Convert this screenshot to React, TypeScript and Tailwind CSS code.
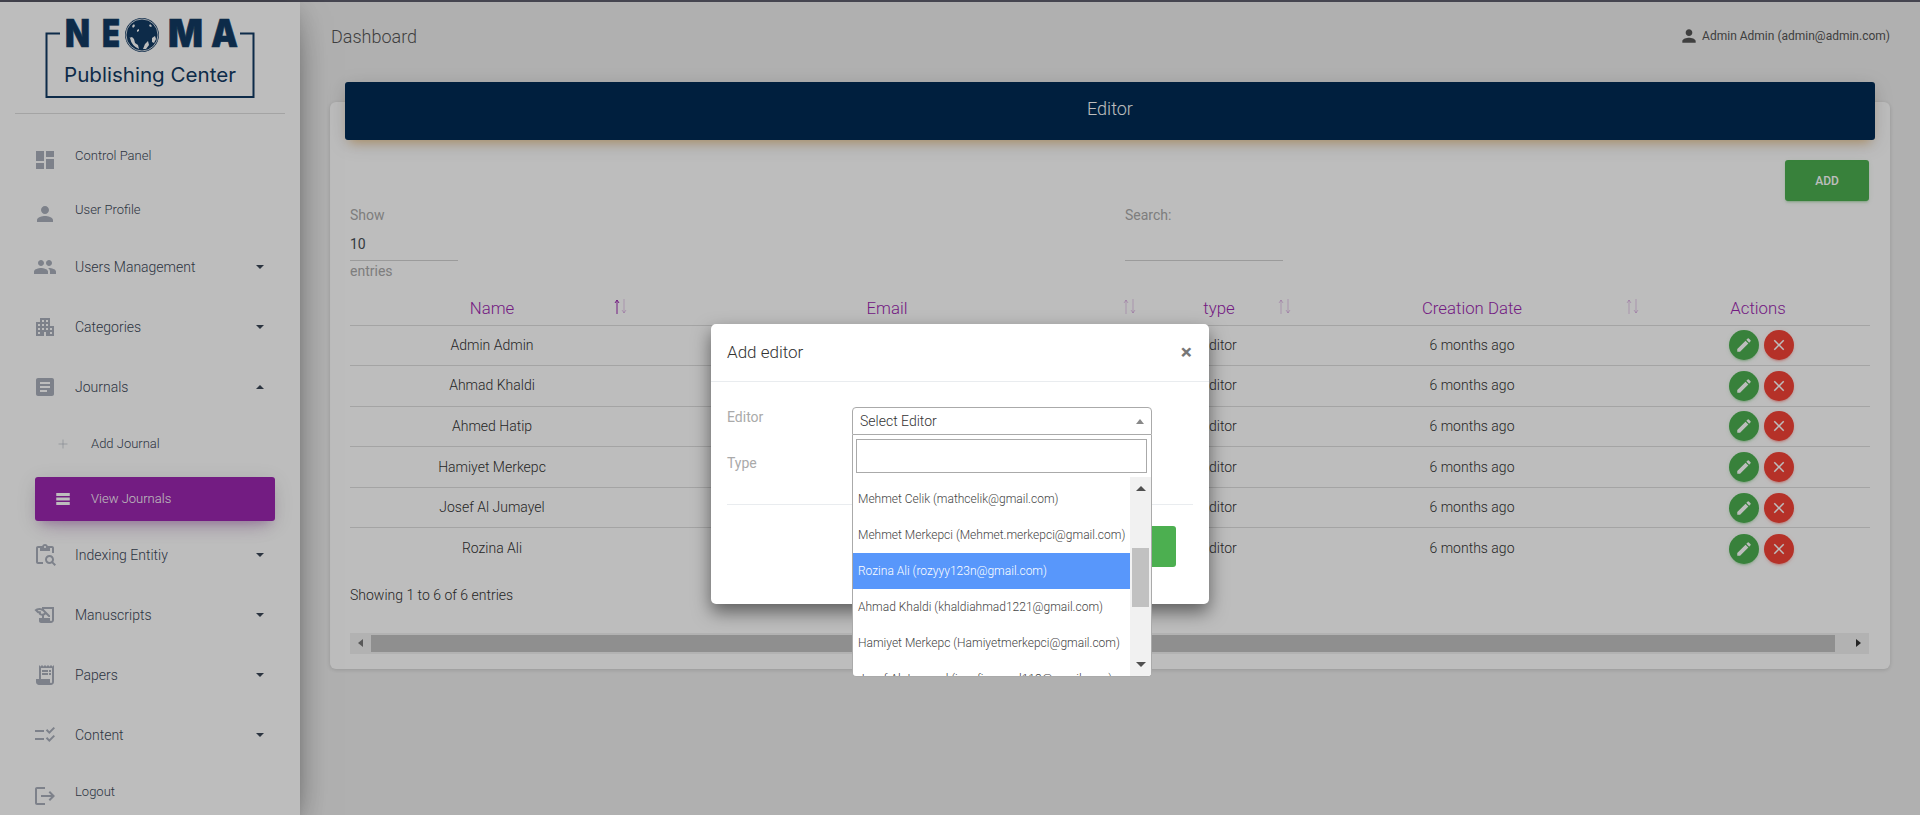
import { Plus } from "lucide-react";
import {
  MdApartment,
  MdArticle,
  MdChecklistRtl,
  MdClose,
  MdContentPasteSearch,
  MdDashboard,
  MdEdit,
  MdHistoryEdu,
  MdLogout,
  MdPeople,
  MdPerson,
  MdReceiptLong,
  MdTableRows,
} from "react-icons/md";

const rows = [
  { name: "Admin Admin", email: "admin@admin.com" },
  { name: "Ahmad Khaldi", email: "khaldiahmad1221@gmail.com" },
  { name: "Ahmed Hatip", email: "ahmedhatip@gmail.com" },
  { name: "Hamiyet Merkepc", email: "Hamiyetmerkepci@gmail.com" },
  { name: "Josef Al Jumayel", email: "josefjumayel113@gmail.com" },
  { name: "Rozina Ali", email: "rozyyy123n@gmail.com" },
];

const options = [
  { label: "Mehmet Celik (mathcelik@gmail.com)" },
  { label: "Mehmet Merkepci (Mehmet.merkepci@gmail.com)" },
  { label: "Rozina Ali (rozyyy123n@gmail.com)", active: true },
  { label: "Ahmad Khaldi (khaldiahmad1221@gmail.com)" },
  { label: "Hamiyet Merkepc (Hamiyetmerkepci@gmail.com)" },
  { label: "Josef Al Jumayel (josefjumayel113@gmail.com)" },
];

function Caret({ up }: { up?: boolean }) {
  return up ? (
    <span className="ml-auto mr-[36px] h-0 w-0 border-x-[4px] border-b-[4px] border-x-transparent border-b-[#3c4858]" />
  ) : (
    <span className="ml-auto mr-[36px] h-0 w-0 border-x-[4px] border-t-[4px] border-x-transparent border-t-[#3c4858]" />
  );
}

function NavLink({ icon, label }: { icon: React.ReactNode; label: string }) {
  return (
    <div className="flex h-[54px] items-center pl-[33px] text-[13px] font-light text-[#3c4858]">
      <span className="mt-[8px] text-[#a9afbb]">{icon}</span>
      <span className="ml-[18px]">{label}</span>
    </div>
  );
}

function NavGroup({ icon, label, open }: { icon: React.ReactNode; label: string; open?: boolean }) {
  return (
    <div className="flex h-[60px] items-center pl-[33px] text-[14px] font-light text-[#3c4858]">
      <span className="text-[#a9afbb]">{icon}</span>
      <span className="ml-[18px]">{label}</span>
      <Caret up={open} />
    </div>
  );
}

function Logo() {
  const navy = "#123a63";
  return (
    <svg width="220" height="109" viewBox="40 2 220 109" className="ml-[40px]">
      <path d="M60 33.5H46.5V97H253.5V33.5H240" fill="none" stroke={navy} strokeWidth="2" />
      <g fill={navy} stroke={navy} strokeWidth="0.6" fontFamily="Inter, sans-serif" fontWeight="900" fontSize="39">
        <text x="65" y="47" textLength="25" lengthAdjust="spacingAndGlyphs">N</text>
        <text x="102" y="47" textLength="18" lengthAdjust="spacingAndGlyphs">E</text>
        <text x="168" y="47" textLength="35" lengthAdjust="spacingAndGlyphs">M</text>
        <text x="211" y="47" textLength="27" lengthAdjust="spacingAndGlyphs">A</text>
      </g>
      <circle cx="142" cy="35" r="17" fill={navy} />
      <circle cx="142" cy="35" r="16" fill="none" stroke="#fff" strokeWidth="0.8" />
      <path
        d="M129 38l3-1 2 2 1 4 3 2 1 4a15 15 0 0 1-9-11zM143 49l2-5 3-3 1 4-3 4a15 15 0 0 1-3 0zM152 38l3-2 1 3-2 4-2-1zM132 26l2-2 1 2-2 2zM137 30l2-1 0 2-2 1zM150 24l2 2-1 1-2-1z"
        fill="#fff"
      />
      <text x="64" y="82" fill={navy} fontFamily="Inter, sans-serif" fontSize="20" textLength="172" lengthAdjust="spacingAndGlyphs">
        Publishing Center
      </text>
    </svg>
  );
}

function Sidebar() {
  return (
    <aside className="relative z-10 flex h-full w-[300px] shrink-0 flex-col bg-white shadow-[0_16px_38px_-12px_rgba(0,0,0,0.56),0_4px_25px_0_rgba(0,0,0,0.12),0_7px_8px_-5px_rgba(0,0,0,0.2)]">
      <div className="h-[111px] shrink-0">
        <Logo />
      </div>
      <div className="mx-[15px] h-px shrink-0 bg-[#ddd]" />
      <nav className="pt-[15px]">
        <NavLink icon={<MdDashboard size={24} />} label="Control Panel" />
        <NavLink icon={<MdPerson size={24} />} label="User Profile" />
        <NavGroup icon={<MdPeople size={24} />} label="Users Management" />
        <NavGroup icon={<MdApartment size={24} />} label="Categories" />
        <NavGroup icon={<MdArticle size={24} />} label="Journals" open />
        <div className="flex h-[54px] items-center pl-[56px] text-[13px] font-light text-[#3c4858]">
          <Plus size={14} strokeWidth={1} className="-mt-px text-[#a9afbb]" />
          <span className="ml-[21px]">Add Journal</span>
        </div>
        <div className="ml-[35px] mr-[25px] mt-[6px] flex h-[44px] items-center rounded-[3px] bg-[#9c27b0] pl-[19px] text-[13px] font-light text-white shadow-[0_12px_20px_-10px_rgba(156,39,176,0.28),0_4px_20px_0_rgba(0,0,0,0.12),0_7px_8px_-5px_rgba(156,39,176,0.2)]">
          <MdTableRows size={18} className="-mt-px" />
          <span className="ml-[19px]">View Journals</span>
        </div>
        <div className="mt-[4px]">
          <NavGroup icon={<MdContentPasteSearch size={24} />} label="Indexing Entitiy" />
          <NavGroup icon={<MdHistoryEdu size={24} />} label="Manuscripts" />
          <NavGroup icon={<MdReceiptLong size={24} />} label="Papers" />
          <NavGroup icon={<MdChecklistRtl size={24} />} label="Content" />
        </div>
        <NavLink icon={<MdLogout size={24} />} label="Logout" />
      </nav>
    </aside>
  );
}

function SortArrows({ active, near }: { active?: boolean; near?: boolean }) {
  return (
    <svg
      width="13"
      height="15"
      viewBox="0 0 13 15"
      fill="none"
      stroke="currentColor"
      strokeWidth="1"
      className={near ? "absolute right-[4px] top-[9px]" : "absolute right-[7px] top-[9px]"}
    >
      <path d="M3 15V1M1 4l2-3 2 3" opacity={active ? 1 : 0.25} />
      <path d="M10 0v14M8 11l2 3 2-3" opacity="0.25" />
    </svg>
  );
}

function EditorTable() {
  const headers = [
    { label: "Name", sort: true, active: true },
    { label: "Email", sort: true, near: true },
    { label: "type", sort: true },
    { label: "Creation Date", sort: true },
    { label: "Actions" },
  ];
  return (
    <table className="mt-[10px] w-[1520px] table-fixed border-collapse">
      <colgroup>
        <col className="w-[284px]" />
        <col className="w-[506px]" />
        <col className="w-[158px]" />
        <col className="w-[348px]" />
        <col className="w-[224px]" />
      </colgroup>
      <thead>
        <tr className="h-[35px] border-b border-[#ddd]">
          {headers.map((h) => (
            <th key={h.label} className="relative pt-[2px] text-center text-[16.8px] font-light text-[#9c27b0]">
              {h.label}
              {h.sort && <SortArrows active={h.active} near={h.near} />}
            </th>
          ))}
        </tr>
      </thead>
      <tbody>
        {rows.map((r, i) => (
          <tr key={r.name} className={i < 5 ? "h-[40.6px] border-b border-[#ddd]" : "h-[40.6px]"}>
            <td className="text-center text-[14px] font-light text-[#333]">{r.name}</td>
            <td className="text-center text-[14px] font-light text-[#333]">{r.email}</td>
            <td className="text-center text-[14px] font-light text-[#333]">Editor</td>
            <td className="text-center text-[14px] font-light text-[#333]">6 months ago</td>
            <td>
              <div className="flex justify-center gap-[5px] pl-[7px]">
                <span className="flex h-[30px] w-[30px] items-center justify-center rounded-full bg-[#4caf50] text-white shadow-[0_2px_2px_0_rgba(76,175,80,0.14),0_3px_1px_-2px_rgba(76,175,80,0.2),0_1px_5px_0_rgba(76,175,80,0.12)]">
                  <MdEdit size={18} />
                </span>
                <span className="flex h-[30px] w-[30px] items-center justify-center rounded-full bg-[#f44336] text-white shadow-[0_2px_2px_0_rgba(244,67,54,0.14),0_3px_1px_-2px_rgba(244,67,54,0.2),0_1px_5px_0_rgba(244,67,54,0.12)]">
                  <MdClose size={18} />
                </span>
              </div>
            </td>
          </tr>
        ))}
      </tbody>
    </table>
  );
}

function Card() {
  return (
    <section className="ml-[30px] mt-[32px] h-[567px] w-[1560px] rounded-[6px] bg-white shadow-[0_1px_4px_0_rgba(0,0,0,0.14)]">
      <div className="relative top-[-20px] mx-[15px] -mb-[20px] flex h-[58px] items-center justify-center rounded-[3px] bg-[#002b54] pb-[5px] text-[18px] font-light text-white shadow-[0_4px_20px_0_rgba(0,0,0,0.14),0_7px_10px_-5px_rgba(255,152,0,0.4)]">
        Editor
      </div>
      <div className="px-[20px] pt-[20px]">
        <div className="flex justify-end pr-px">
          <button className="h-[41px] w-[84px] rounded-[3px] bg-[#4caf50] text-[12px] font-medium text-white shadow-[0_2px_2px_0_rgba(76,175,80,0.14),0_3px_1px_-2px_rgba(76,175,80,0.2),0_1px_5px_0_rgba(76,175,80,0.12)]">
            ADD
          </button>
        </div>
        <div className="mt-[5px] flex text-[14px] leading-[18px] text-[#aaa]">
          <div className="w-[775px]">
            <div>Show</div>
            <div className="mt-[8px] h-[29px] w-[108px] border-b border-[#d2d2d2] leading-[24px] text-[#495057]">10</div>
            <div className="mt-[1px]">entries</div>
          </div>
          <div>
            <div>Search:</div>
            <div className="mt-[8px] h-[29px] w-[158px] border-b border-[#d2d2d2]" />
          </div>
        </div>
        <EditorTable />
        <div className="mt-[17px] text-[14px] font-light leading-[18px] text-[#333]">Showing 1 to 6 of 6 entries</div>
        <div className="mt-[29px] flex h-[21px] w-[1519px] items-center bg-[#f1f1f1]">
          <span className="flex w-[21px] justify-center">
            <span className="h-0 w-0 border-y-[4px] border-r-[5px] border-y-transparent border-r-[#777]" />
          </span>
          <span className="h-[17px] flex-1 bg-[#c1c1c1]" />
          <span className="flex w-[34px] justify-end pr-[8px]">
            <span className="h-0 w-0 border-y-[4px] border-l-[5px] border-y-transparent border-l-[#333]" />
          </span>
        </div>
      </div>
    </section>
  );
}

function SelectDropdown() {
  return (
    <div className="absolute left-[141px] top-[111px] h-[242px] w-[300px] overflow-hidden rounded-b-[4px] border-x border-b border-[#aaa] bg-white">
      <div className="px-[3px] pt-[4px]">
        <div className="h-[34px] w-[291px] border border-[#aaa]" />
      </div>
      <div className="mt-[4px] flex h-[200px]">
        <ul className="w-[277px] pt-[4px] text-[12px] font-light">
          {options.map((o) => (
            <li
              key={o.label}
              className={
                o.active
                  ? "flex h-[36px] items-center whitespace-nowrap bg-[#5897fb] pl-[5px] text-white"
                  : "flex h-[36px] items-center whitespace-nowrap pl-[5px] text-[#444]"
              }
            >
              {o.label}
            </li>
          ))}
        </ul>
        <div className="flex w-[21px] flex-col items-center bg-[#f1f1f1]">
          <span className="mt-[9px] h-0 w-0 border-x-[5px] border-b-[5px] border-x-transparent border-b-[#505050]" />
          <span className="mt-[57px] h-[59px] w-[17px] bg-[#c1c1c1]" />
          <span className="mt-[55px] h-0 w-0 border-x-[5px] border-t-[5px] border-x-transparent border-t-[#505050]" />
        </div>
      </div>
    </div>
  );
}

function Modal() {
  return (
    <div className="absolute left-[711px] top-[324px] z-30 h-[280px] w-[498px] rounded-[5px] bg-white shadow-[0_8px_18px_rgba(0,0,0,0.5)]">
      <div className="flex h-[58px] items-center justify-between border-b border-[#e9ecef] pl-[16px] pr-[17px]">
        <h5 className="text-[17px] font-light text-[#333]">Add editor</h5>
        <span className="text-[21px] font-bold leading-none text-[#777]">×</span>
      </div>
      <div className="px-[16px] pt-[25px]">
        <div className="flex h-[28px] text-[14px] leading-[20px] text-[#aaa]">
          <span className="w-[125px]">Editor</span>
          <div className="flex h-[28px] w-[300px] items-center rounded-t-[4px] border border-[#aaa] pl-[7px] font-light text-[#333]">
            Select Editor
            <span className="ml-auto mr-[7px] h-0 w-0 border-x-[4px] border-b-[5px] border-x-transparent border-b-[#888]" />
          </div>
        </div>
        <div className="mt-[18px] flex h-[28px] text-[14px] leading-[20px] text-[#aaa]">
          <span className="w-[125px]">Type</span>
          <div className="h-[28px] w-[300px] rounded-[4px] border border-[#aaa]" />
        </div>
        <div className="mt-[23px] h-px bg-[#e9ecef]" />
        <div className="mt-[21px] flex justify-end pr-[17px]">
          <button className="h-[41px] w-[84px] rounded-[3px] bg-[#4caf50] text-[12px] font-medium text-white">ADD</button>
        </div>
      </div>
      <SelectDropdown />
    </div>
  );
}

export default function App() {
  return (
    <div className="relative flex h-[815px] w-full flex-col overflow-hidden bg-[#eee] font-['Roboto',sans-serif]">
      <div className="h-[2px] shrink-0 bg-[#5d5d6c]" />
      <div className="flex min-h-0 flex-1">
        <Sidebar />
        <main className="flex-1">
          <header className="flex h-[68px] items-center justify-between pl-[31px] pr-[30px]">
            <span className="text-[18px] font-light text-[#555]">Dashboard</span>
            <span className="flex items-center text-[12px] text-[#555]">
              <MdPerson size={20} className="mr-[3px]" />
              Admin Admin (admin@admin.com)
            </span>
          </header>
          <Card />
        </main>
      </div>
      <div className="absolute inset-0 z-20 bg-black/26" />
      <Modal />
    </div>
  );
}
